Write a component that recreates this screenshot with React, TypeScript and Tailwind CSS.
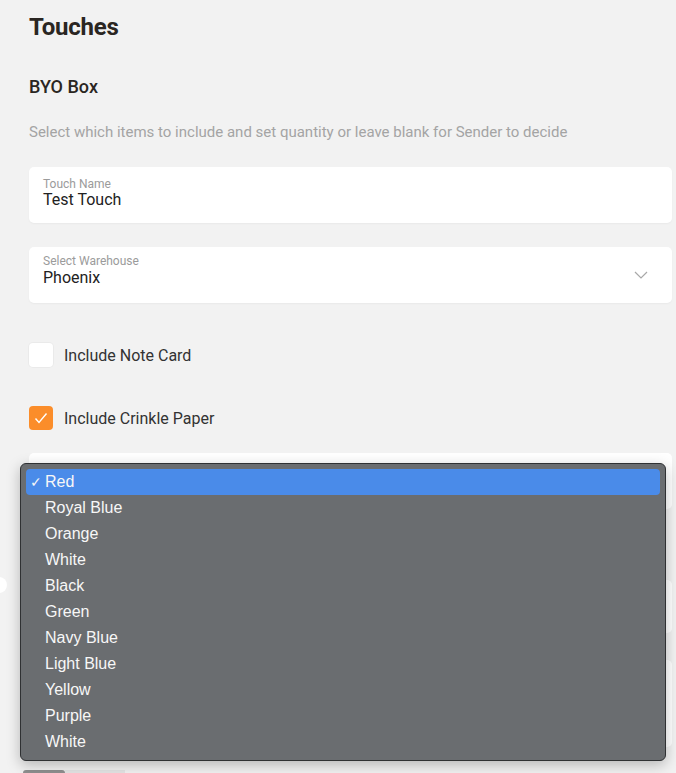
import React from "react";

const items = [
  "Red",
  "Royal Blue",
  "Orange",
  "White",
  "Black",
  "Green",
  "Navy Blue",
  "Light Blue",
  "Yellow",
  "Purple",
  "White",
];

function Field({
  label,
  value,
  select,
  pt,
  valueLeading,
}: {
  label: string;
  value: string;
  select?: boolean;
  pt: string;
  valueLeading: string;
}) {
  return (
    <div className="h-[56px] bg-white rounded-[5px] shadow-[0_1px_2px_rgba(0,0,0,0.04)] flex items-start pl-[14px] pr-[24px]">
      <div className={"flex-1 flex flex-col " + pt}>
        <span className="text-[12px] leading-[13px] text-[#9b9b9b]">{label}</span>
        <span className={"text-[16px] text-[#222] " + valueLeading}>{value}</span>
      </div>
      {select && (
        <svg width="14" height="8" viewBox="0 0 14 8" className="mt-[24px]">
          <path d="M1 1 L7 7 L13 1" fill="none" stroke="#a8a8a8" strokeWidth="1.2" />
        </svg>
      )}
    </div>
  );
}

export default function App() {
  return (
    <div
      className="relative w-[676px] h-[773px] overflow-hidden bg-[#f2f2f2]"
      style={{ fontFamily: "Roboto, 'Liberation Sans', sans-serif" }}
    >
      <div className="pl-[29px] pr-[4px] flex flex-col">
        <h1 className="mt-[11px] h-[32px] leading-[32px] text-[24px] font-bold text-[#2a2622] tracking-[-0.2px]">
          Touches
        </h1>
        <h2 className="mt-[32px] h-[24px] leading-[24px] text-[18px] font-medium text-[#2a2622]">BYO Box</h2>
        <p className="mt-[23px] h-[20px] leading-[20px] text-[15px] text-[#a4a4a4]">
          Select which items to include and set quantity or leave blank for Sender to decide
        </p>
        <div className="mt-[25px]">
          <Field label="Touch Name" value="Test Touch" pt="pt-[11px]" valueLeading="leading-[18px]" />
        </div>
        <div className="mt-[24px]">
          <Field label="Select Warehouse" value="Phoenix" select pt="pt-[8px]" valueLeading="leading-[20px]" />
        </div>
        <label className="mt-[40px] flex items-center gap-[11px] h-[24px]">
          <span className="w-[24px] h-[24px] rounded-[4px] bg-white shadow-[0_0_0_1px_rgba(0,0,0,0.03)]" />
          <span className="text-[16px] text-[#333] mt-[1px]">Include Note Card</span>
        </label>
        <label className="mt-[39px] flex items-center gap-[11px] h-[24px]">
          <span className="w-[24px] h-[24px] rounded-[4px] bg-[#fb8d2a] flex items-center justify-center">
            <svg width="14" height="12" viewBox="0 0 14 12">
              <path d="M1.5 6.5 L5 10.5 L12.5 1.5" fill="none" stroke="white" strokeWidth="1.4" />
            </svg>
          </span>
          <span className="text-[16px] text-[#333] mt-[1px]">Include Crinkle Paper</span>
        </label>
        <div className="mt-[23px] h-[56px] bg-white rounded-[5px]" />
        <div className="mt-[71px] h-[53px] bg-white rounded-[5px] flex items-start">
          <span className="-ml-[38px] -mt-[3px] w-[16px] h-[16px] rounded-full bg-white" />
        </div>
        <div className="mt-[27px] h-[87px] bg-white rounded-[5px]" />
        <div className="mt-[23px] flex">
          <span className="ml-[-6px] w-[42px] h-[12px] rounded-t-[3px] bg-[#8f8f8f]" />
          <span className="w-[60px] h-[12px] bg-[#e4e4e4]" />
        </div>
      </div>

      <div
        className="absolute left-[20px] top-[463px] w-[646px] rounded-[6px] border border-[#2f3133] bg-[#6a6d70] p-[5px] shadow-[0_4px_14px_rgba(0,0,0,0.25)]"
        style={{ fontFamily: "'Liberation Sans', Arial, sans-serif" }}
      >
        {items.map((it, i) => (
          <div
            key={i}
            className={
              "h-[26px] flex items-center rounded-[4px] text-[16px] text-[#f7f7f7] " +
              (i === 0 ? "bg-[#4a8be9]" : "")
            }
          >
            <span className="w-[19px] pl-[4px] text-[14px]">{i === 0 ? "✓" : ""}</span>
            <span>{it}</span>
          </div>
        ))}
      </div>
    </div>
  );
}
